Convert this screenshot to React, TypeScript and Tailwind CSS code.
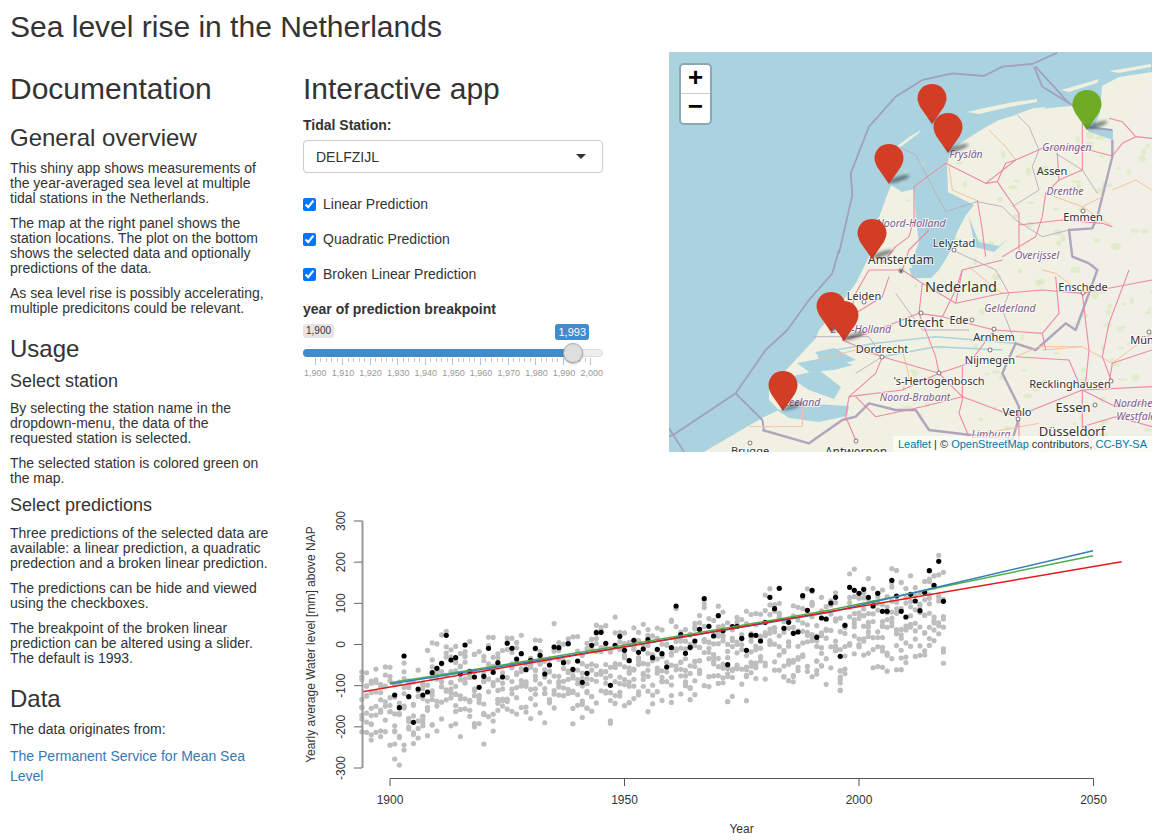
// Sea level rise dashboard
const BLACK = [585,623,468,590,667,567,585,576,518,505,490,406,480,473,522,435,514,531,562,529,445,517,488,531,430,445,477,461,509,481,445,466,522,495,441,443,488,431,508,483,547,520,436,398,397,430,556,436,409,451,482,421,457,447,419,473,448,461,501,443,318,404,460,442,423,388,296,379,408,347,392,494,380,379,415,451,405,406,423,367,292,326,265,385,367,400,396,287,331,271,412,354,357,309,292,469,376,262,271,280,268,292,318,280,334,334,241,288,334,351,283,303,332,277,212,256,184,304];

const yearX = (year: number) => 390 + 4.69 * (year - 1900);

function makeRandom(seed: number) {
  let s = seed;
  return () => {
    s = (s * 16807) % 2147483647;
    return s / 2147483647;
  };
}

const OFFSETS = [-20, -8, 2, 10, 17, 24, 31, 39, 50];

function greyPoints() {
  const rnd = makeRandom(4711);
  const points: { x: number; y: number }[] = [];
  for (let year = 1894; year <= 2018; year++) {
    const base = year > 1900 ? 500 + BLACK[year - 1901] / 3 : 684 + rnd() * 10 - 5;
    const mid = 686 - (year - 1900) * 0.66;
    const centre = (base + mid) / 2;
    OFFSETS.forEach((off) => {
      if (rnd() < 0.12) return;
      points.push({ x: yearX(year), y: centre + off + (rnd() + rnd() - 1) * 20 });
    });
  }
  // the low outliers of the early years and of the late nineties
  [[1901, 744], [1901, 759], [1902, 765], [1903, 745], [1903, 750], [1896, 740], [1920, 744], [1996, 690], [1996, 683], [1996, 677], [1996, 671]].forEach(([year, y]) => {
    points.push({ x: yearX(year), y });
  });
  return points;
}

const GREY = greyPoints();

const xTicks = [1900, 1950, 2000, 2050];
const yTicks = [300, 200, 100, 0, -100, -200, -300];

function SeaLevelPlot() {
  const axisY = (v: number) => 644.5 - v * 0.4117;
  return (
    <svg viewBox="303 500 849 340" width={849} height={340} className="block">
      {GREY.map((p, i) => (
        <circle key={i} cx={p.x} cy={p.y} r={2.6} fill="#bebebe" />
      ))}
      {BLACK.map((y, i) => (
        <circle key={i} cx={yearX(1901 + i)} cy={500 + y / 3} r={2.6} fill="#000" />
      ))}
      <path d="M390 682.7 Q 650 642 830 610 L 1093 555.7" fill="none" stroke="#4daf4a" strokeWidth={1.5} />
      <path d="M390 684 L 624 647 L 830 612.3 L 1093 550.7" fill="none" stroke="#377eb8" strokeWidth={1.5} />
      <path d="M362.7 691.7 L 1121.7 561.7" fill="none" stroke="#e41a1c" strokeWidth={1.5} />

      <g fill="#333" fontFamily="'Liberation Sans', sans-serif" fontSize={12}>
        <path d="M362.5 520.7 V768" stroke="#999" strokeWidth={2} />
        {yTicks.map((v) => (
          <g key={v}>
            <path d={`M354 ${axisY(v)} H362`} stroke="#666" strokeWidth={1} />
            <text transform={`translate(345 ${axisY(v)}) rotate(-90)`} textAnchor="middle">{v}</text>
          </g>
        ))}
        <text transform="translate(315 644.5) rotate(-90)" textAnchor="middle">
          Yearly average Water level [mm] above NAP
        </text>
        <path d="M390 778.5 H1093.5" stroke="#555" strokeWidth={1} />
        {xTicks.map((year) => (
          <g key={year}>
            <path d={`M${yearX(year)} 778.5 V786`} stroke="#555" strokeWidth={1} />
            <text x={yearX(year)} y={804} textAnchor="middle">{year}</text>
          </g>
        ))}
        <text x={741.5} y={833} textAnchor="middle">Year</text>
      </g>
    </svg>
  );
}

// points are read off the map in local pixels
const line = (pts: number[][]) => "M" + pts.map((p) => p.join(" ")).join(" L");
const top = (pts: number[][]) => line(pts.map(([x, y]) => [x / 3, y / 3 - 2]));
const low = (pts: number[][]) => line(pts.map(([x, y]) => [x / 3, 198 + y / 3]));

const LAND = "M483 20 L450 25 L433 34 L431 60 L426 74 L444 78 L444 88 L420 80 L412 65 L403 54 L380 56 L347 63 L330 68 L317 75 L293 90 L283 98 L278 112 L245 137 L233 140 L222 133 L217 146 L208 171 L200 205 L187 231 L167 258 L150 278 L147 286 L133 301 L117 318 L100 331 L100 348 L110 358 L93 366 L33 401 L483 401 Z";
const WATER = [
  "M245 137 L278 112 L279 140 L305 153 L297 163 L288 180 L283 196 L278 205 L270 218 L245 222 L242 212 L250 190 L247 170 Z",
  "M147 300 L165 296 L187 308 L176 311 L150 307 Z",
  "M128 311 L160 305 L184 313 L165 318 L140 320 Z",
  "M120 325 L150 318 L172 335 L165 347 L140 338 Z",
  "M108 358 L145 352 L180 354 L178 364 L150 370 L120 366 Z",
  "M300 165 L306 195 L325 200 L340 186 L330 194 L310 190 Z",
  "M240 216 L270 218 L262 226 L243 226 Z",
];
const ISLANDS = [
  "M227 95 L240 85 L252 78 L250 81 L238 90 L229 97 Z",
  "M298 60 L320 55 L345 50 L368 47 L368 50 L340 55 L310 62 Z",
  "M345 63 L365 56 L378 55 L370 60 Z",
  "M392 38 L420 30 L430 27 L428 31 L400 40 Z",
  "M440 19 L482 12 L482 15 L450 21 Z",
];

const MOTORWAYS = [
  top([[735,410],[830,340],[950,400],[1040,330],[1120,295],[1240,295],[1330,318],[1360,280],[1400,260],[1449,265]]),
  top([[950,400],[985,395],[1010,340],[1040,330]]),
  top([[735,410],[735,510],[720,560],[680,590],[640,640]]),
  top([[925,450],[940,540],[950,620]]),
  top([[985,395],[1050,490],[1050,600]]),
  top([[1050,525],[1180,510],[1300,520],[1330,530]]),
  top([[1120,500],[1130,430],[1170,390],[1165,310]]),
  top([[1170,390],[1240,360],[1240,300],[1240,220]]),
  top([[1320,205],[1360,215],[1400,260]]),
  top([[1120,500],[1100,560],[1000,620]]),
  low([[600,60],[700,60],[760,100],[860,160],[1000,130],[1120,120],[1240,130],[1449,90]]),
  low([[600,60],[560,130],[520,270],[600,250],[750,190],[820,200],[975,240],[1120,250]]),
  low([[750,190],[800,320],[810,370],[880,440],[1040,500],[1240,420],[1449,410]]),
  low([[520,270],[640,320],[620,370],[540,440],[530,500],[560,570]]),
  low([[640,320],[810,370],[900,340],[975,240]]),
  low([[810,370],[700,420],[540,440]]),
  low([[880,350],[880,450],[870,490],[900,560]]),
  low([[1050,500],[1050,600]]),
  low([[1240,420],[1240,530],[1280,600]]),
  low([[1240,130],[1260,300],[1250,400]]),
  low([[1449,300],[1330,340],[1320,400]]),
  low([[1040,320],[1200,330],[1230,400]]),
  low([[700,60],[720,0],[780,-60]]),
  low([[760,100],[750,190]]),
  low([[860,160],[880,60],[1000,30]]),
  low([[660,80],[640,140],[560,190]]),
  low([[820,200],[860,120],[880,60]]),
  low([[1160,80],[1170,190],[1120,250],[1130,300]]),
  low([[1380,60],[1320,220],[1300,320],[1330,400]]),
  low([[1240,420],[1340,470],[1449,460]]),
  low([[1240,530],[1340,500],[1449,530]]),
  low([[560,440],[620,500],[760,470],[880,440]]),
];
const MINOR = [
  top([[840,350],[850,420],[920,450]]),
  top([[960,240],[1010,290],[1040,330]]),
  top([[1130,430],[1240,470],[1300,440]]),
  low([[440,330],[560,300],[640,320]]),
  low([[1040,320],[1110,290],[1240,290]]),
  low([[900,560],[1000,540],[1110,520]]),
  low([[240,530],[400,530],[400,470]]),
  low([[1330,340],[1449,250]]),
  low([[1120,60],[1160,70],[1240,130]]),
  low([[900,50],[960,100],[1000,130]]),
  low([[700,300],[720,380],[700,420]]),
  low([[1120,300],[1240,290],[1330,340]]),
  top([[1330,420],[1400,390],[1449,420]]),
  top([[1240,470],[1330,530]]),
];
const RIVERS = [
  low([[440,310],[620,280],[800,260],[1040,280]]),
  low([[640,320],[800,290],[1000,300]]),
];
const MARITIME = [
  top([[1165,8],[1090,42],[1000,50],[945,78],[850,70],[760,90],[680,140],[600,230],[545,370],[550,435],[510,610]]),
  low([[510,0],[490,70],[420,150],[355,240],[290,300],[200,430],[20,550],[0,560]]),
  low([[200,430],[280,510],[285,540]]),
  low([[0,535],[45,605]]),
  top([[1095,50],[1120,110],[1210,165],[1255,232],[1330,240]]),
  top([[1100,50],[1200,160]]),
];
const BORDERS = [
  top([[1330,270],[1330,320],[1300,440],[1285,500],[1270,535],[1200,540],[1210,620],[1260,640]]),
  low([[1260,40],[1285,60],[1220,240],[1190,220],[1100,300],[1040,280],[1000,370],[1050,470],[1045,520],[1030,570]]),
  low([[1030,570],[780,540],[740,480],[680,480],[600,460],[560,500],[520,510],[420,580],[280,540]]),
];
const PROVINCE = [
  top([[690,290],[740,315],[830,485],[925,455],[1000,470],[1040,510],[1120,560],[1200,540]]),
  top([[1045,195],[1080,230],[1110,300],[1090,350],[1110,420],[1030,470]]),
  top([[1160,310],[1240,360],[1285,430]]),
  low([[850,0],[980,60],[1020,130],[1000,180],[1040,280]]),
  low([[680,130],[760,240],[900,240]]),
  low([[430,260],[600,260],[640,320],[560,370]]),
];

const CITY_DOTS = [[383,121],[414,159],[285,198],[232,219],[195,250],[252,261],[303,268],[325,277],[321,298],[213,305],[270,321],[414,241],[442,329],[426,353],[349,367],[187,389],[81,391],[480,280]];

const LABELS: [string, number, number, number, boolean][] = [
  ["Fryslân", 297, 106, 10.5, true],
  ["Groningen", 398, 99, 10.5, true],
  ["Assen", 383, 123, 11, false],
  ["Drenthe", 396, 143, 10.5, true],
  ["Emmen", 414, 169, 11, false],
  ["Noord-Holland", 242, 175, 10.5, true],
  ["Lelystad", 285, 195, 11, false],
  ["Overijssel", 368, 207, 10.5, true],
  ["Amsterdam", 232, 212, 12, false],
  ["Nederland", 292, 240, 14.5, false],
  ["Enschede", 414, 239, 11, false],
  ["Leiden", 195, 248, 11, false],
  ["Gelderland", 341, 260, 10.5, true],
  ["Zuid-Holland", 192, 281, 10.5, true],
  ["Utrecht", 252, 275, 13, false],
  ["Ede", 290, 272, 11, false],
  ["Arnhem", 325, 289, 11, false],
  ["Dordrecht", 213, 301, 11, false],
  ["Nijmegen", 321, 312, 11, false],
  ["'s-Hertogenbosch", 270, 333, 11, false],
  ["Recklinghausen", 401, 336, 11, false],
  ["Noord-Brabant", 246, 349, 10.5, true],
  ["Zeeland", 133, 354, 10.5, true],
  ["Venlo", 348, 364, 11, false],
  ["Essen", 404, 360, 13, false],
  ["Nordrhein-", 470, 355, 10.5, true],
  ["Westfalen", 470, 368, 10.5, true],
  ["Limburg", 322, 386, 10.5, true],
  ["Düsseldorf", 403, 384, 13, false],
  ["Antwerpen", 187, 404, 12, false],
  ["Brugge", 81, 403, 11, false],
  ["Mün", 473, 292, 11, false],
];

const PIN = "M14.5 0C6.4 0 0 6.2 0 14c0 3.6 1.5 6.7 3 9.4L14.5 40 26 23.4c1.5-2.7 3-5.8 3-9.4C29 6.2 22.6 0 14.5 0z";

const MARKERS = [
  { x: 263, y: 72, fill: "url(#pinRed)" },
  { x: 279, y: 101, fill: "url(#pinRed)" },
  { x: 220, y: 132, fill: "url(#pinRed)" },
  { x: 203, y: 207, fill: "url(#pinRed)" },
  { x: 418, y: 78, fill: "url(#pinGreen)" },
  { x: 162, y: 280, fill: "url(#pinRed)" },
  { x: 175, y: 289, fill: "url(#pinRed)" },
  { x: 114, y: 359, fill: "url(#pinRed)" },
];

function greenPatches() {
  const rnd = makeRandom(90210);
  const patches: { x: number; y: number; rx: number; ry: number }[] = [];
  for (let i = 0; i < 130; i++) {
    const x = 230 + rnd() * 253;
    const y = 80 + rnd() * 320;
    patches.push({ x, y, rx: 1.5 + rnd() * 3.5, ry: 1 + rnd() * 3 });
  }
  return patches;
}
const PATCHES = greenPatches();

function StationMap() {
  return (
    <div className="relative h-[400px] w-[483px] overflow-hidden bg-[#aad3df]">
      <svg width={483} height={400} viewBox="0 0 483 400" className="block">
        <defs>
          <filter id="pinShadow" x="-50%" y="-50%" width="200%" height="200%">
            <feGaussianBlur stdDeviation="1.4" />
          </filter>
          <radialGradient id="pinRed" cx="0.5" cy="0.36" r="0.62">
            <stop offset="0.75" stopColor="#d33d26" />
            <stop offset="1" stopColor="#b23a24" />
          </radialGradient>
          <radialGradient id="pinGreen" cx="0.5" cy="0.36" r="0.62">
            <stop offset="0.75" stopColor="#6dac24" />
            <stop offset="1" stopColor="#5c8f26" />
          </radialGradient>
        </defs>
        <path d={LAND} fill="#f0f1e2" />
        <path d="M400 180 L483 20 L483 400 L350 400 Z" fill="#f1efe8" opacity={0.7} />
        {PATCHES.map((p, i) => (
          <ellipse key={i} cx={p.x} cy={p.y} rx={p.rx} ry={p.ry} fill="#cfe5b0" opacity={0.45} />
        ))}
        {WATER.map((d) => (
          <path key={d} d={d} fill="#aad3df" />
        ))}
        {ISLANDS.map((d) => (
          <path key={d} d={d} fill="#eff0df" />
        ))}
        <g fill="none" strokeLinejoin="round">
          {RIVERS.map((d) => (
            <path key={d} d={d} stroke="#aad3df" strokeWidth={1.5} />
          ))}
          {PROVINCE.map((d) => (
            <path key={d} d={d} stroke="#b7adc2" strokeWidth={0.9} />
          ))}
          {MARITIME.map((d) => (
            <path key={d} d={d} stroke="#a3a0bd" strokeWidth={1.8} />
          ))}
          {BORDERS.map((d) => (
            <path key={d} d={d} stroke="#b0a5bd" strokeWidth={2.4} />
          ))}
          {MINOR.map((d) => (
            <path key={d} d={d} stroke="#f8c09f" strokeWidth={1} />
          ))}
          {MOTORWAYS.map((d) => (
            <path key={d} d={d} stroke="#ee88a6" strokeWidth={1.1} />
          ))}
        </g>
        {CITY_DOTS.map(([x, y]) => (
          <circle key={`${x}-${y}`} cx={x} cy={y} r={2} fill="#fff" stroke="#555" strokeWidth={0.8} />
        ))}
        <circle cx={232} cy={219} r={1} fill="#333" />
        <g fontFamily="'Noto Sans', sans-serif" textAnchor="middle">
          {LABELS.map(([name, x, y, size, italic]) => (
            <text
              key={name}
              x={x}
              y={y}
              fontSize={size}
              fontStyle={italic ? "italic" : "normal"}
              fill={italic ? "#7d5a8c" : "#333"}
              stroke="#fff"
              strokeOpacity={0.7}
              strokeWidth={2}
              paintOrder="stroke"
            >
              {name}
            </text>
          ))}
        </g>
        {MARKERS.map((m) => (
          <ellipse
            key={`s${m.x}`}
            cx={m.x + 10}
            cy={m.y - 5}
            rx={11}
            ry={2.6}
            transform={`rotate(-18 ${m.x + 10} ${m.y - 5})`}
            fill="#1d2a33"
            opacity={0.55}
            filter="url(#pinShadow)"
          />
        ))}
        {MARKERS.map((m) => (
          <path key={`m${m.x}`} d={PIN} transform={`translate(${m.x - 14.5} ${m.y - 40})`} fill={m.fill} />
        ))}
      </svg>

      <div className="absolute left-[10px] top-[11px] w-[33px] rounded-[5px] border-2 border-black/20 bg-clip-padding">
        <div className="flex h-[29px] items-center justify-center rounded-t-[3px] border-b border-[#ccc] bg-white text-[26px] font-bold text-black [font-family:'Liberation_Mono',monospace]">
          +
        </div>
        <div className="flex h-[29px] items-center justify-center rounded-b-[3px] bg-white text-[26px] font-bold text-black [font-family:'Liberation_Mono',monospace]">
          −
        </div>
      </div>

      <div className="absolute bottom-0 right-0 bg-white/70 px-[5px] text-[11px] leading-[16px] text-[#333]">
        <span className="text-[#0078a8]">Leaflet</span> | © <span className="text-[#0078a8]">OpenStreetMap</span> contributors, <span className="text-[#0078a8]">CC-BY-SA</span>
      </div>
    </div>
  );
}

const SLIDER_LABELS = ["1,900", "1,910", "1,920", "1,930", "1,940", "1,950", "1,960", "1,970", "1,980", "1,990", "2,000"];
const SLIDER_TICKS = Array.from({ length: 51 }, (_, i) => i);

function BreakpointSlider() {
  return (
    <div className="w-[300px]">
      <div className="mt-[7px] flex h-[16px] items-start justify-between">
        <span className="rounded-[3px] bg-black/10 px-[3px] text-[10px] leading-[14px] text-[#333]">1,900</span>
        <span className="mr-[14px] rounded-[3px] bg-[#428bca] px-[3px] text-[11px] leading-[16px] text-white">1,993</span>
      </div>
      <div className="relative mt-[9px] h-[8px] rounded-full border border-[#ddd] bg-[#eee]">
        <div className="-m-px h-[8px] w-[270px] rounded-full bg-[#428bca]" />
        <div className="absolute left-[259px] top-[-7px] h-[20px] w-[20px] rounded-full border border-[#aaa] bg-[#dedede] shadow-[0_1px_2px_rgba(0,0,0,0.3)]" />
      </div>
      <div className="flex items-start justify-between px-[11.5px] pt-px">
        {SLIDER_TICKS.map((i) => (
          <div key={i} className={i % 5 === 0 ? "h-[7px] w-px bg-[#a9c7e4]" : "h-[4px] w-px bg-[#c4c4c4]"} />
        ))}
      </div>
      <div className="mt-[2px] flex justify-between pl-px text-[9px] leading-[12px] text-[#999]">
        {SLIDER_LABELS.map((label) => (
          <span key={label}>{label}</span>
        ))}
      </div>
    </div>
  );
}

const CHECKS = ["Linear Prediction", "Quadratic Prediction", "Broken Linear Prediction"];

function Controls() {
  return (
    <div className="w-[300px]">
      <h1 className="mt-5 text-[30px] leading-[33px] font-medium">Interactive app</h1>
      <div className="mt-[12.5px] text-sm leading-[15px] font-bold">Tidal Station:</div>
      <div className="mt-[7.5px] flex h-[33px] items-center justify-between rounded border border-[#ccc] bg-white pl-3 pr-[16px] text-sm">
        <span>DELFZIJL</span>
        <span className="h-0 w-0 border-x-[5px] border-t-[5px] border-x-transparent border-t-[#333]" />
      </div>
      <div className="mt-[13.5px]">
        {CHECKS.map((label) => (
          <label key={label} className="flex h-[35px] items-center gap-[7px] text-sm">
            <input type="checkbox" defaultChecked className="m-0 h-[13px] w-[13px]" />
            {label}
          </label>
        ))}
      </div>
      <div className="mt-[10px] text-sm leading-[15px] font-bold">year of prediction breakpoint</div>
      <BreakpointSlider />
    </div>
  );
}

function Documentation() {
  return (
    <div className="w-[293px] shrink-0 pl-[10px] pr-[22px] text-sm leading-[15px]">
      <h1 className="mt-5 text-[30px] leading-[33px] font-medium">Documentation</h1>
      <h3 className="mt-5 mb-2.5 text-2xl leading-[26.4px] font-medium">General overview</h3>
      <p className="mb-2.5">This shiny app shows measurements of the year-averaged sea level at multiple tidal stations in the Netherlands.</p>
      <p className="mb-2.5">The map at the right panel shows the station locations. The plot on the bottom shows the selected data and optionally predictions of the data.</p>
      <p className="mb-2.5">As sea level rise is possibly accelerating, multiple predicitons could be relevant.</p>
      <h3 className="mt-5 mb-[9px] text-2xl leading-[26.4px] font-medium">Usage</h3>
      <h4 className="mb-[9.5px] text-lg leading-[19.8px] font-medium">Select station</h4>
      <p className="mb-2.5">By selecting the station name in the dropdown-menu, the data of the requested station is selected.</p>
      <p className="mb-2.5">The selected station is colored green on the map.</p>
      <h4 className="my-2.5 text-lg leading-[19.8px] font-medium">Select predictions</h4>
      <p className="mb-2.5">Three predictions of the selected data are available: a linear prediction, a quadratic predection and a broken linear prediction.</p>
      <p className="mb-2.5">The predictions can be hide and viewed using the checkboxes.</p>
      <p className="mb-2.5">The breakpoint of the broken linear prediction can be altered using a slider. The default is 1993.</p>
      <h3 className="mt-5 mb-2.5 text-2xl leading-[26.4px] font-medium">Data</h3>
      <p className="mb-[9px]">The data originates from:</p>
      <a className="block leading-5 text-[#337ab7]">The Permanent Service for Mean Sea Level</a>
    </div>
  );
}

export default function App() {
  return (
    <div className="h-[840px] w-[1166px] overflow-hidden bg-white text-[#333] [font-family:'Liberation_Sans',Arial,sans-serif]">
      <h2 className="flex h-[52px] items-center px-[10px] text-[30px] leading-[33px] font-medium">Sea level rise in the Netherlands</h2>
      <div className="flex">
        <Documentation />
        <div className="w-[859px] pl-[10px]">
          <div className="flex justify-between">
            <Controls />
            <StationMap />
          </div>
          <div className="mt-[48px]">
            <SeaLevelPlot />
          </div>
        </div>
      </div>
    </div>
  );
}
